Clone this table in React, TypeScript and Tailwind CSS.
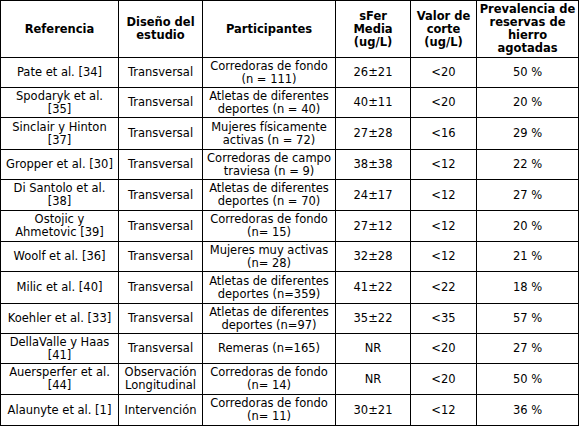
const header = [
  ["Referencia"],
  ["Diseño del", "estudio"],
  ["Participantes"],
  ["sFer", "Media", "(ug/L)"],
  ["Valor de", "corte", "(ug/L)"],
  ["Prevalencia de", "reservas de", "hierro", "agotadas"],
];

const rows: { h: string; cells: string[][] }[] = [
  { h: "h-[30px]", cells: [["Pate et al. [34]"], ["Transversal"], ["Corredoras de fondo", "(n = 111)"], ["26±21"], ["<20"], ["50 %"]] },
  { h: "h-[30px]", cells: [["Spodaryk et al.", "[35]"], ["Transversal"], ["Atletas de diferentes", "deportes (n = 40)"], ["40±11"], ["<20"], ["20 %"]] },
  { h: "h-[32px]", cells: [["Sinclair y Hinton", "[37]"], ["Transversal"], ["Mujeres físicamente", "activas (n = 72)"], ["27±28"], ["<16"], ["29 %"]] },
  { h: "h-[30px]", cells: [["Gropper et al. [30]"], ["Transversal"], ["Corredoras de campo", "traviesa (n = 9)"], ["38±38"], ["<12"], ["22 %"]] },
  { h: "h-[31px]", cells: [["Di Santolo et al.", "[38]"], ["Transversal"], ["Atletas de diferentes", "deportes (n = 70)"], ["24±17"], ["<12"], ["27 %"]] },
  { h: "h-[31px]", cells: [["Ostojic y", "Ahmetovic [39]"], ["Transversal"], ["Corredoras de fondo", "(n= 15)"], ["27±12"], ["<12"], ["20 %"]] },
  { h: "h-[30px]", cells: [["Woolf et al. [36]"], ["Transversal"], ["Mujeres muy activas", "(n= 28)"], ["32±28"], ["<12"], ["21 %"]] },
  { h: "h-[32px]", cells: [["Milic et al. [40]"], ["Transversal"], ["Atletas de diferentes", "deportes (n=359)"], ["41±22"], ["<22"], ["18 %"]] },
  { h: "h-[30px]", cells: [["Koehler et al. [33]"], ["Transversal"], ["Atletas de diferentes", "deportes (n=97)"], ["35±22"], ["<35"], ["57 %"]] },
  { h: "h-[30px]", cells: [["DellaValle y Haas", "[41]"], ["Transversal"], ["Remeras (n=165)"], ["NR"], ["<20"], ["27 %"]] },
  { h: "h-[31px]", cells: [["Auersperfer et al.", "[44]"], ["Observación", "Longitudinal"], ["Corredoras de fondo", "(n= 14)"], ["NR"], ["<20"], ["50 %"]] },
  { h: "h-[31px]", cells: [["Alaunyte et al. [1]"], ["Intervención"], ["Corredoras de fondo", "(n= 11)"], ["30±21"], ["<12"], ["36 %"]] },
];

const widths = ["w-[118px]", "w-[84px]", "w-[133px]", "w-[75px]", "w-[66px]", "w-[102px]"];

const Lines = ({ lines }: { lines: string[] }) => (
  <>
    {lines.map((l, i) => (
      <span key={i} className="block whitespace-nowrap">
        {l}
      </span>
    ))}
  </>
);

const App = () => {
  return (
    <main className="bg-white w-[579px] h-[426px] font-['DejaVu_Sans',Verdana,sans-serif] text-[11.5px] leading-[13px] text-black">
      <table className="table-fixed border-collapse w-[579px]">
        <colgroup>
          {widths.map((w, i) => (
            <col key={i} className={w} />
          ))}
        </colgroup>
        <thead>
          <tr className="h-[57px]">
            {header.map((c, i) => (
              <th key={i} className="border border-black text-center align-middle font-bold p-0">
                <Lines lines={c} />
              </th>
            ))}
          </tr>
        </thead>
        <tbody>
          {rows.map((r, i) => (
            <tr key={i} className={r.h}>
              {r.cells.map((c, j) => (
                <td key={j} className="border border-black text-center align-middle p-0">
                  <Lines lines={c} />
                </td>
              ))}
            </tr>
          ))}
        </tbody>
      </table>
    </main>
  );
};

export default App;
